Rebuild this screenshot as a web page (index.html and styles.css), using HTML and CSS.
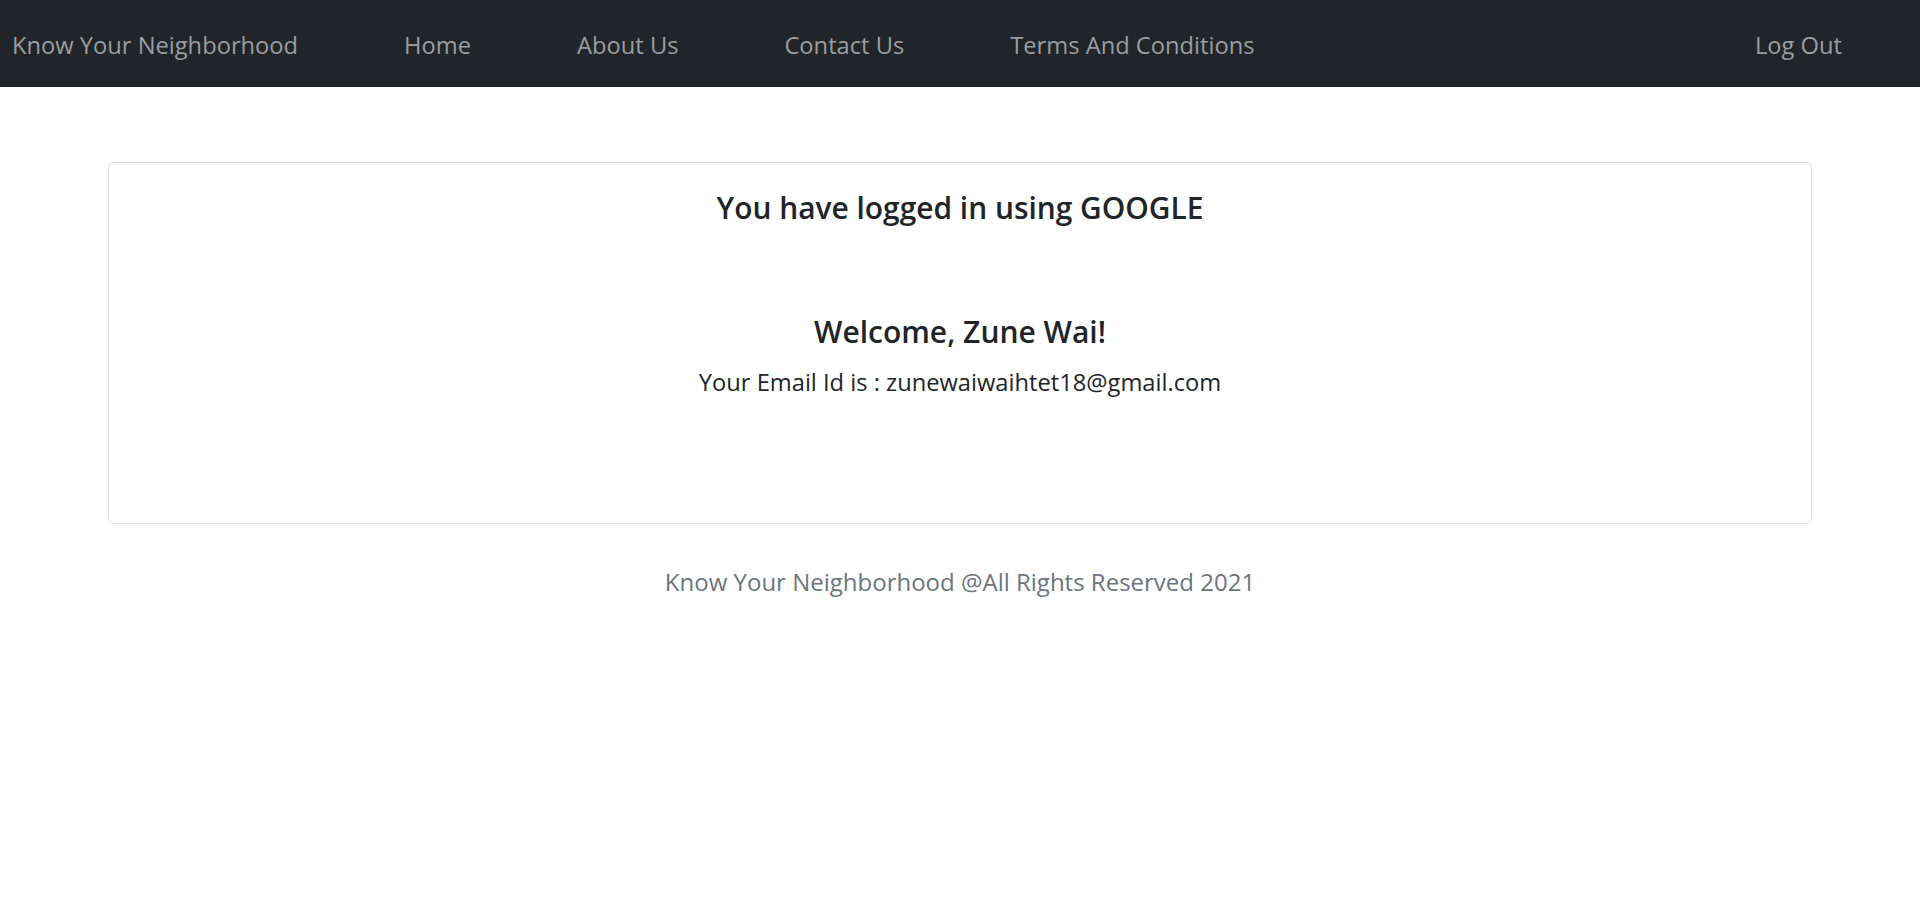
FILE: index.html
```html
<!DOCTYPE html>
<html lang="en">
<head>
<meta charset="utf-8">
<title>Know Your Neighborhood</title>
<link rel="stylesheet" href="styles.css">
</head>
<body>
<nav class="navbar">
  <a class="nav-link brand" href="#">Know Your Neighborhood</a>
  <a class="nav-link" href="#">Home</a>
  <a class="nav-link" href="#">About Us</a>
  <a class="nav-link" href="#">Contact Us</a>
  <a class="nav-link" href="#">Terms And Conditions</a>
  <a class="nav-link logout" href="#">Log Out</a>
</nav>
<main class="main">
  <section class="card">
    <h4 class="card-title">You have logged in using GOOGLE</h4>
    <h3 class="welcome">Welcome, Zune Wai!</h3>
    <p class="email">Your Email Id is : zunewaiwaihtet18@gmail.com</p>
  </section>
  <footer class="footer">Know Your Neighborhood @All Rights Reserved 2021</footer>
</main>
</body>
</html>
```
FILE: styles.css
```css
html, body {
  margin: 0;
  padding: 0;
  background: #ffffff;
  font-family: "Open Sans", "Noto Sans", sans-serif;
  color: #212529;
}

.navbar {
  height: 87px;
  box-sizing: border-box;
  background: #212529;
  display: flex;
  align-items: center;
  padding: 2px 78px 0 12px;
  gap: 106px;
}

.nav-link {
  color: #9a9da0;
  text-decoration: none;
  font-size: 23.7px;
  line-height: 30px;
}

.logout {
  margin-left: auto;
}

.main {
  padding: 75px 108px 0 108px;
}

.card {
  border: 1px solid #dfe0e1;
  border-radius: 5px;
  padding: 27px 20px 126px 20px;
  text-align: center;
}

.card-title {
  margin: 0;
  font-size: 29.9px;
  line-height: 36px;
  font-weight: 600;
}

.welcome {
  margin: 86px 0 0 0;
  font-size: 30px;
  line-height: 40px;
  font-weight: 600;
}

.email {
  margin: 15px 0 0 0;
  font-size: 23.7px;
  line-height: 30px;
}

.footer {
  margin-top: 43px;
  text-align: center;
  color: #6c757d;
  font-size: 24px;
  line-height: 30px;
}
```
